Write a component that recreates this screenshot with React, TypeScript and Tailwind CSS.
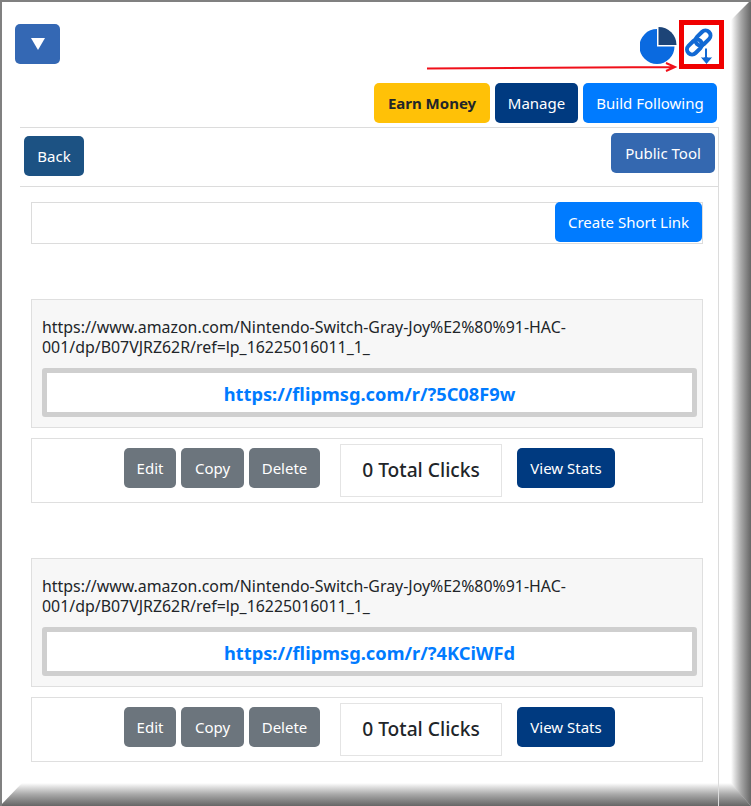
const linkUrl = 'https://www.amazon.com/Nintendo-Switch-Gray-Joy%E2%80%91-HAC-001/dp/B07VJRZ62R/ref=lp_16225016011_1_'

const btn = 'flex h-10 items-center justify-center rounded-[5px] text-[15px] text-white'

const ShortLink = ({ href, className }: { href: string; className: string }) => (
  <div className={className}>
    <div className="h-[129px] w-[672px] border border-[#dfdfdf] bg-[#f7f7f7] pl-[10px] pr-[5px] pt-[17px]">
      <div className="h-[51px] w-[530px] text-[15.900px] leading-[20px] text-[#212529]">{linkUrl}</div>
      <div className="flex h-[49px] items-center justify-center rounded-[3px] border-[5px] border-[#cfcfcf] bg-white pt-[2px] text-[18.250px] font-bold text-[#007bff]">
        {href}
      </div>
    </div>
    <div className="mt-[10px] flex h-[65px] w-[672px] items-start border border-[#dfdfdf] bg-white pl-[92px] pt-[9px]">
      <div className={`${btn} w-[52px] bg-[#6c757d]`}>Edit</div>
      <div className={`${btn} ml-[5px] w-[63px] bg-[#6c757d]`}>Copy</div>
      <div className={`${btn} ml-[5px] w-[71px] bg-[#6c757d]`}>Delete</div>
      <div className="ml-[20px] -mt-[4px] flex h-[53px] w-[162px] items-center justify-center border border-[#e4e4e4] text-[19.200px] font-medium text-[#212529]">
        0 Total Clicks
      </div>
      <div className={`${btn} ml-[15px] w-[98px] bg-[#003a80]`}>View Stats</div>
    </div>
  </div>
)

const App = () => {
  return (
    <div className="relative isolate h-[806px] w-[751px] overflow-hidden bg-white font-['Noto_Sans',sans-serif]">
      {/* bevelled picture frame, the page's rules run over it */}
      <div className="absolute right-0 top-0 -z-10 h-[806px] w-[20px] bg-gradient-to-r from-white via-[#a8a8a8] to-[#666666] [clip-path:polygon(100%_0,100%_100%,0_784px,0_20px)]" />
      <div className="absolute bottom-0 left-0 -z-10 h-[23px] w-[751px] bg-gradient-to-b from-white via-[#a8a8a8] to-[#666666] [clip-path:polygon(0_100%,22px_0,731px_0,100%_100%)]" />
      <div className="absolute inset-x-0 top-0 h-[2px] bg-[#808080]" />
      <div className="absolute inset-y-0 left-0 w-[2px] bg-[#808080]" />

      <div className="flex h-[83px] items-start pl-[15px] pt-[24px]">
        <div className="flex h-10 w-[45px] items-center justify-center rounded-[5px] bg-[#3468b4]">
          <svg width="16" height="14" viewBox="0 0 16 14">
            <path d="M1 1h14L8 13z" fill="#fff" />
          </svg>
        </div>
        <svg className="ml-[580px] mt-[3px]" width="38" height="38" viewBox="0 0 38 38">
          <path d="M17 2A17.500 17.500 0 1 0 34.500 19.500H17z" fill="#0a6ae0" />
          <path d="M18.500 0a18 18 0 0 1 18 18h-18z" fill="#1d4477" />
        </svg>
        <svg className="ml-[6px] mt-[3px]" width="32" height="38" viewBox="0 0 32 38">
          <g fill="none" stroke="#1269d3" strokeWidth="4">
            <rect x="10.500" y="6" width="17" height="10" rx="5" transform="rotate(-45 19 11)" />
            <rect x="2" y="15" width="17" height="10" rx="5" transform="rotate(-45 10.500 20)" />
          </g>
          <path d="M20.500 21h3v9H29l-6.500 7.500L16 30h4.500z" fill="#1269d3" stroke="#fff" strokeWidth="1" />
        </svg>
      </div>

      <div className="flex h-10 pl-[374px]">
        <div className={`${btn} w-[116px] bg-[#ffc107] font-bold !text-[#212529]`}>Earn Money</div>
        <div className={`${btn} ml-[5px] w-[83px] bg-[#003a80]`}>Manage</div>
        <div className={`${btn} ml-[5px] w-[134px] bg-[#007bff]`}>Build Following</div>
      </div>

      <div className="ml-[20px] mt-[4px] h-[690px] w-[699px] border-r border-t border-[#dcdcdc]">
        <div className="flex h-[59px] items-start justify-between border-b border-[#dcdcdc] pl-[4px] pr-[3px]">
          <div className={`${btn} mt-[8px] w-[60px] bg-[#1c5283]`}>Back</div>
          <div className={`${btn} mt-[5px] w-[104px] bg-[#3468b0]`}>Public Tool</div>
        </div>

        <div className="ml-[11px] mt-[15px] flex h-[42px] w-[672px] justify-end border border-[#dcdcdc] bg-white">
          <div className={`${btn} -my-px w-[147px] bg-[#007bff]`}>Create Short Link</div>
        </div>

        <ShortLink className="ml-[11px] mt-[55px]" href="https://flipmsg.com/r/?5C08F9w" />
        <ShortLink className="ml-[11px] mt-[55px]" href="https://flipmsg.com/r/?4KCiWFd" />
      </div>

      {/* red callout over the icons */}
      <div className="absolute left-[679px] top-[20px] h-[49px] w-[45px] border-[5px] border-[#f00000]" />
      <svg className="absolute left-[426px] top-[60px]" width="252" height="14" viewBox="0 0 252 14">
        <path d="M1 8.500L248 7M240 3l9 4-9 4" fill="none" stroke="#f0101a" strokeWidth="2" />
      </svg>
    </div>
  )
}

export default App
